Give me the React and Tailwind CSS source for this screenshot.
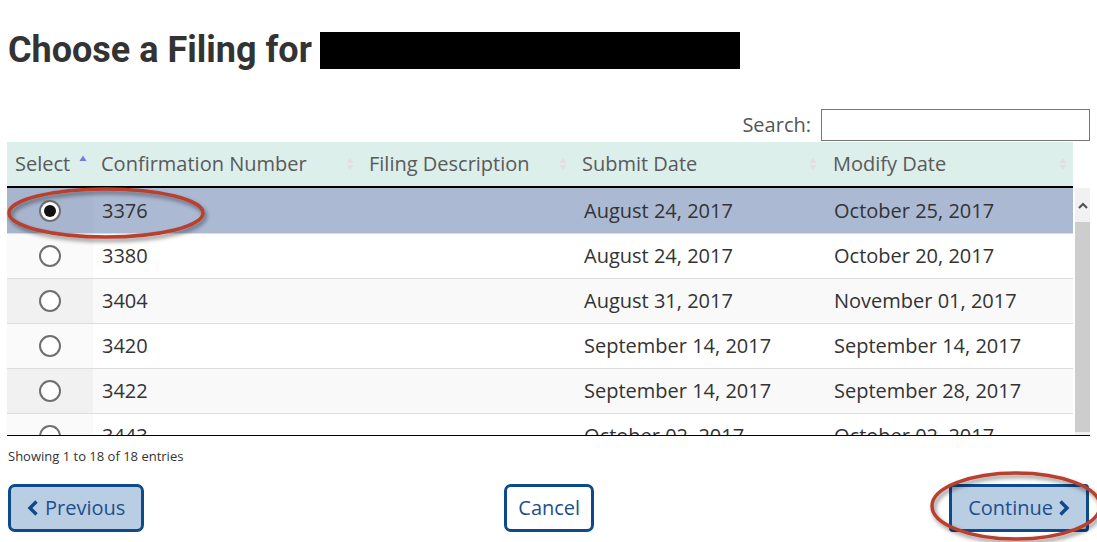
import React from "react";

const rows = [
  { n: "3376", s: "August 24, 2017", m: "October 25, 2017", sel: true },
  { n: "3380", s: "August 24, 2017", m: "October 20, 2017" },
  { n: "3404", s: "August 31, 2017", m: "November 01, 2017" },
  { n: "3420", s: "September 14, 2017", m: "September 14, 2017" },
  { n: "3422", s: "September 14, 2017", m: "September 28, 2017" },
  { n: "3443", s: "October 02, 2017", m: "October 02, 2017" },
  { n: "3450", s: "October 05, 2017", m: "October 06, 2017" },
  { n: "3461", s: "October 11, 2017", m: "October 12, 2017" },
];

function SortIcon({ active }) {
  if (active) {
    return (
      <svg width="8" height="16" viewBox="0 0 8 16" className="shrink-0 -mt-[6px]">
        <path d="M4 2.5 L7.5 8 L0.5 8 Z" fill="#737de0" />
      </svg>
    );
  }
  return (
    <svg width="8" height="16" viewBox="0 0 8 16" className="shrink-0">
      <path d="M4 2 L7.5 7 L0.5 7 Z" fill="#e8dcdf" />
      <path d="M4 14 L7.5 9 L0.5 9 Z" fill="#e8dcdf" />
    </svg>
  );
}

function Radio({ checked }) {
  return (
    <div className="w-[22px] h-[22px] rounded-full border-2 border-[#6f6f6f] bg-white flex items-center justify-center">
      {checked && <div className="w-[12px] h-[12px] rounded-full bg-[#111]" />}
    </div>
  );
}

const cols = "grid grid-cols-[86px_267px_213px_250px_250px]";

export default function App() {
  return (
    <div
      className="relative w-[1097px] h-[542px] overflow-hidden bg-white text-[#333]"
      style={{ fontFamily: '"Open Sans", "Liberation Sans", sans-serif' }}
    >
      <div className="pt-[28px] pl-[8px] flex items-center gap-[8px] h-[72px]">
        <h1
          className="text-[36px] leading-[44px] font-bold text-[#333]"
          style={{ fontFamily: 'Roboto, "Liberation Sans", sans-serif' }}
        >
          Choose a Filing for
        </h1>
        <div className="w-[420px] h-[37px] bg-black" />
      </div>

      <div className="mt-[37px] flex justify-end items-center pr-[7px] gap-[10px]">
        <span className="text-[20px] text-[#555] leading-[32px]">Search:</span>
        <div className="w-[269px] h-[32px] border border-[#767676] bg-white" />
      </div>

      <div className="mt-[1px] ml-[7px] w-[1083px]">
        {/* header */}
        <div className="flex">
          <div className={`${cols} w-[1066px] h-[46px] bg-[#dcefeb] border-b-2 border-black text-[20px] text-[#5a5a5a]`}>
            <div className="flex items-center justify-between pl-[8px] pr-[6px]">
              <span>Select</span>
              <SortIcon active />
            </div>
            <div className="flex items-center justify-between pl-[8px] pr-[6px]">
              <span>Confirmation Number</span>
              <SortIcon />
            </div>
            <div className="flex items-center justify-between pl-[9px] pr-[6px]">
              <span>Filing Description</span>
              <SortIcon />
            </div>
            <div className="flex items-center justify-between pl-[9px] pr-[6px]">
              <span>Submit Date</span>
              <SortIcon />
            </div>
            <div className="flex items-center justify-between pl-[10px] pr-[6px]">
              <span>Modify Date</span>
              <SortIcon />
            </div>
          </div>
        </div>

        {/* body */}
        <div className="flex h-[248px] border-b border-black overflow-hidden">
          <div className="w-[1066px] h-[247px] overflow-hidden">
            {rows.map((r, i) => {
              const odd = i % 2 === 0;
              const rowBg = r.sel ? "bg-[#abb9d3]" : odd ? "bg-[#f9f9f9]" : "bg-white";
              const selBg = r.sel ? "bg-[#a7b5cf]" : odd ? "bg-[#f1f1f1]" : "bg-[#fafafa]";
              return (
                <div
                  key={r.n}
                  className={`${cols} h-[45px] ${rowBg} ${i > 0 ? "border-t border-[#dddddd]" : ""} text-[20px] text-[#333]`}
                >
                  <div className={`${selBg} flex items-center justify-center`}>
                    <Radio checked={r.sel} />
                  </div>
                  <div className="flex items-center pl-[9px]">{r.n}</div>
                  <div />
                  <div className="flex items-center pl-[11px]">{r.s}</div>
                  <div className="flex items-center pl-[11px]">{r.m}</div>
                </div>
              );
            })}
          </div>
          <div className="w-[17px] pl-[2px] h-[247px]">
            <div className="w-[15px] h-full bg-[#f1f1f1] flex flex-col">
              <div className="h-[34px] flex items-center justify-center">
                <svg width="10" height="7" viewBox="0 0 10 7">
                  <path d="M1 6 L5 2 L9 6" stroke="#505050" strokeWidth="2" fill="none" />
                </svg>
              </div>
              <div className="h-[210px] bg-[#cdcdcd]" />
            </div>
          </div>
        </div>
      </div>

      <div className="pl-[8px] mt-[11px] text-[13px] leading-[18px] text-[#333]">
        Showing 1 to 18 of 18 entries
      </div>

      <div className="mt-[19px] px-[8px] pr-[8px] flex justify-between">
        <button className="h-[48px] px-[16px] rounded-[7px] border-[3px] border-[#0d4a8b] bg-[#b9cee2] text-[20px] text-[#1c4f8e] flex items-center gap-[6px]">
          <svg width="12" height="16" viewBox="0 0 12 16">
            <path d="M9.5 1.5 L3 8 L9.5 14.5" stroke="#0d4a8b" strokeWidth="3.4" fill="none" />
          </svg>
          <span>Previous</span>
        </button>
        <button className="ml-[5px] h-[48px] px-[11px] rounded-[7px] border-[3px] border-[#0d4a8b] bg-white text-[20px] text-[#1c4f8e]">
          Cancel
        </button>
        <button className="h-[48px] px-[16px] rounded-[4px] border-[3px] border-[#0d4a8b] bg-[#b9cee2] text-[20px] text-[#1c4f8e] flex items-center gap-[5px]">
          <span>Continue</span>
          <svg width="12" height="16" viewBox="0 0 12 16">
            <path d="M2.5 1.5 L9 8 L2.5 14.5" stroke="#0d4a8b" strokeWidth="3.4" fill="none" />
          </svg>
        </button>
      </div>

      {/* annotation ellipses */}
      <svg className="absolute inset-0 pointer-events-none" width="1097" height="542">
        <defs>
          <filter id="sh" x="-20%" y="-40%" width="140%" height="180%">
            <feDropShadow dx="2" dy="3" stdDeviation="2" floodColor="#000" floodOpacity="0.45" />
          </filter>
        </defs>
        <ellipse cx="106" cy="213" rx="97" ry="24" fill="none" stroke="#b9402f" strokeWidth="3.5" filter="url(#sh)" />
        <ellipse cx="1016" cy="506" rx="84" ry="33" fill="none" stroke="#b9402f" strokeWidth="3.5" filter="url(#sh)" />
      </svg>
    </div>
  );
}
